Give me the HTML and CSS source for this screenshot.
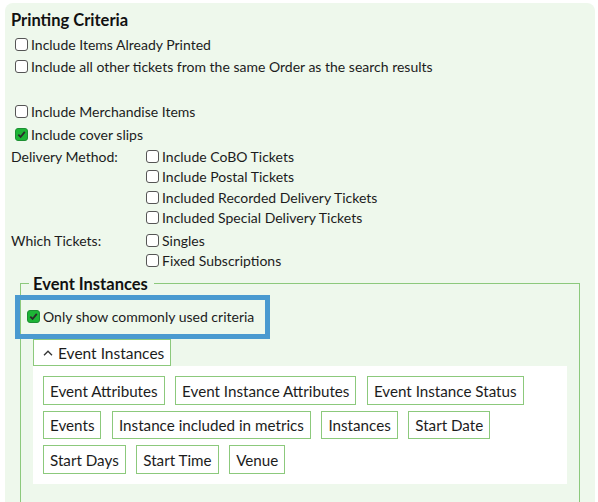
FILE: index.html
```html
<!DOCTYPE html>
<html>
<head>
<meta charset="utf-8">
<link rel="stylesheet" href="styles.css">
</head>
<body>
<div class="panel">
  <h2 class="title">Printing Criteria</h2>
  <div class="checks">
    <label class="row"><span class="cb"></span>Include Items Already Printed</label>
    <label class="row"><span class="cb"></span>Include all other tickets from the same Order as the search results</label>
    <div class="row"></div>
    <label class="row"><span class="cb"></span>Include Merchandise Items</label>
    <label class="row"><span class="cb on"><svg viewBox="0 0 12 12"><path d="M2.5 6.2 L5 8.7 L9.6 3.2" fill="none" stroke="#2b2b2b" stroke-width="2"/></svg></span>Include cover slips</label>
  </div>
  <div class="grid">
    <div class="glabel">Delivery Method:</div>
    <div class="gopts">
      <label class="grow"><span class="cb"></span>Include CoBO Tickets</label>
      <label class="grow"><span class="cb"></span>Include Postal Tickets</label>
      <label class="grow"><span class="cb"></span>Included Recorded Delivery Tickets</label>
      <label class="grow"><span class="cb"></span>Included Special Delivery Tickets</label>
    </div>
    <div class="glabel">Which Tickets:</div>
    <div class="gopts">
      <label class="grow"><span class="cb"></span>Singles</label>
      <label class="grow"><span class="cb"></span>Fixed Subscriptions</label>
    </div>
  </div>
  <fieldset class="fs">
    <legend class="legend">Event Instances</legend>
    <div class="highlight">
      <label class="row"><span class="cb on"><svg viewBox="0 0 12 12"><path d="M2.5 6.2 L5 8.7 L9.6 3.2" fill="none" stroke="#2b2b2b" stroke-width="2"/></svg></span>Only show commonly used criteria</label>
    </div>
    <button class="toggle"><svg class="chev" viewBox="0 0 10 6"><path d="M1 5.2 L5 1.2 L9 5.2" fill="none" stroke="#333" stroke-width="1.3"/></svg>Event Instances</button>
    <div class="tags">
      <span class="tag">Event Attributes</span>
      <span class="tag">Event Instance Attributes</span>
      <span class="tag">Event Instance Status</span>
      <span class="tag">Events</span>
      <span class="tag">Instance included in metrics</span>
      <span class="tag">Instances</span>
      <span class="tag">Start Date</span>
      <span class="tag">Start Days</span>
      <span class="tag">Start Time</span>
      <span class="tag">Venue</span>
    </div>
  </fieldset>
</div>
</body>
</html>
```
FILE: styles.css
```css
html, body {
  margin: 0;
  padding: 0;
  background: #ffffff;
  overflow: hidden;
}
body {
  font-family: Lato, "Liberation Sans", sans-serif;
  color: #1c1c1c;
  font-size: 14px;
}
.panel {
  margin: 3px 3px 0 5px;
  background: #eef8ec;
  border-radius: 8px;
  padding: 7px 0 40px 6px;
  min-height: 520px;
  box-sizing: border-box;
}
.title {
  margin: 0;
  font-size: 16.5px;
  font-weight: 700;
  line-height: 21px;
  color: #111;
}
.checks {
  margin-top: 1.75px;
  padding-left: 4px;
}
.row {
  display: flex;
  align-items: center;
  height: 22.5px;
}
.cb {
  display: inline-flex;
  align-items: center;
  justify-content: center;
  width: 13px;
  height: 13px;
  box-sizing: border-box;
  border: 1px solid #555;
  border-radius: 3px;
  background: #fff;
  margin-right: 3px;
  flex: none;
}
.cb.on {
  background: #1db536;
  border-color: #1d8f33;
}
.cb svg {
  width: 11px;
  height: 11px;
}
.grid {
  display: grid;
  grid-template-columns: 135px auto;
  row-gap: 2px;
  margin-top: 0.5px;
}
.glabel {
  height: 20.5px;
  display: flex;
  align-items: center;
}
.grow {
  display: flex;
  align-items: center;
  height: 20.5px;
}
.fs {
  margin: 4px 15px 0 9px;
  border: 1px solid #8cc97c;
  padding: 0 12px 20px 12px;
  min-width: 0;
}
.legend {
  margin-left: -4px;
  padding: 0 6px 0 4px;
  font-size: 16.5px;
  font-weight: 700;
  line-height: 18px;
  color: #111;
}
.highlight {
  margin: 2px 0 0 -18px;
  width: 255px;
  height: 44px;
  box-sizing: border-box;
  border: 5px solid #4a9ad0;
  padding-left: 7px;
  display: flex;
  align-items: center;
}
.toggle {
  display: flex;
  align-items: center;
  height: 27.5px;
  box-sizing: border-box;
  border: 1px solid #8cc97c;
  background: #fff;
  font-family: inherit;
  font-size: 15.5px;
  color: #1c1c1c;
  padding: 0 6px 0 9px;
  margin: 0;
}
.chev {
  width: 10px;
  height: 6px;
  margin-right: 5px;
}
.tags {
  background: #fff;
  padding: 10px;
  display: flex;
  flex-wrap: wrap;
  column-gap: 10.5px;
  row-gap: 6px;
}
.tag {
  display: inline-flex;
  align-items: center;
  height: 28.5px;
  box-sizing: border-box;
  border: 1px solid #8cc97c;
  padding: 0 6px;
  font-size: 15.2px;
  color: #1c1c1c;
}
```
